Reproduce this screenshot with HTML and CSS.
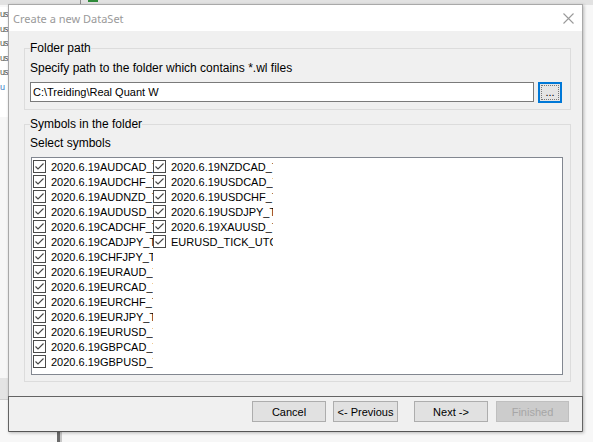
FILE: index.html
```html
<!DOCTYPE html>
<html lang="en">
<head>
  <meta charset="UTF-8">
  <title>Create a new DataSet</title>
  <link rel="stylesheet" href="styles.css">
</head>
<body>
  <div class="bg-toolbar"><span class="bg-sep"></span><span class="bg-mark"></span></div>
  <ul class="bg-list">
    <li>us</li>
    <li>us</li>
    <li>us</li>
    <li>us</li>
    <li>us</li>
    <li class="bg-link">u</li>
  </ul>
  <div class="bg-panel"></div>
  <div class="bg-bar"></div>

  <div class="dialog">
    <div class="titlebar">
      <span class="title">Create a new DataSet</span>
      <svg class="close" width="11" height="11" viewBox="0 0 11 11">
        <path d="M0.5 0.5 L10.5 10.5 M10.5 0.5 L0.5 10.5" stroke="#9a9a9a" stroke-width="1.1" fill="none"/>
      </svg>
    </div>

    <div class="content">
      <fieldset class="group folder">
        <legend>Folder path</legend>
        <p class="hint">Specify path to the folder which contains *.wl files</p>
        <div class="path-row">
          <input class="path" type="text" value="C:\Treiding\Real Quant W">
          <button class="browse"><span>...</span></button>
        </div>
      </fieldset>

      <fieldset class="group symbols">
        <legend>Symbols in the folder</legend>
        <p class="hint">Select symbols</p>
        <div class="symbol-list">
          <label class="item"><span class="check"></span>2020.6.19AUDCAD_TICK</label>
          <label class="item"><span class="check"></span>2020.6.19AUDCHF_TICK</label>
          <label class="item"><span class="check"></span>2020.6.19AUDNZD_TICK</label>
          <label class="item"><span class="check"></span>2020.6.19AUDUSD_TICK</label>
          <label class="item"><span class="check"></span>2020.6.19CADCHF_TICK</label>
          <label class="item"><span class="check"></span>2020.6.19CADJPY_TICK</label>
          <label class="item"><span class="check"></span>2020.6.19CHFJPY_TICK</label>
          <label class="item"><span class="check"></span>2020.6.19EURAUD_TICK</label>
          <label class="item"><span class="check"></span>2020.6.19EURCAD_TICK</label>
          <label class="item"><span class="check"></span>2020.6.19EURCHF_TICK</label>
          <label class="item"><span class="check"></span>2020.6.19EURJPY_TICK</label>
          <label class="item"><span class="check"></span>2020.6.19EURUSD_TICK</label>
          <label class="item"><span class="check"></span>2020.6.19GBPCAD_TICK</label>
          <label class="item"><span class="check"></span>2020.6.19GBPUSD_TICK</label>
          <label class="item"><span class="check"></span>2020.6.19NZDCAD_TICK</label>
          <label class="item"><span class="check"></span>2020.6.19USDCAD_TICK</label>
          <label class="item"><span class="check"></span>2020.6.19USDCHF_TICK</label>
          <label class="item"><span class="check"></span>2020.6.19USDJPY_TICK</label>
          <label class="item"><span class="check"></span>2020.6.19XAUUSD_TICK</label>
          <label class="item"><span class="check"></span>EURUSD_TICK_UTC</label>
        </div>
      </fieldset>
    </div>

    <div class="footer">
      <button class="btn cancel">Cancel</button>
      <button class="btn prev">&lt;- Previous</button>
      <button class="btn next">Next -&gt;</button>
      <button class="btn finish" disabled>Finished</button>
    </div>
  </div>
</body>
</html>
```

FILE: styles.css
```css
body {
  margin: 0;
  width: 593px;
  height: 442px;
  overflow: hidden;
  position: relative;
  background: #f7f7f7;
  font-family: "Liberation Sans", Arial, sans-serif;
  font-size: 11px;
  color: #000;
}

/* things behind the dialog */
.bg-toolbar {
  position: absolute;
  left: 0;
  top: 0;
  width: 593px;
  height: 5px;
  background: #e2e2e2;
}
.bg-sep {
  position: absolute;
  left: 80px;
  top: 0;
  width: 1px;
  height: 5px;
  background: #8a8a8a;
}
.bg-mark {
  position: absolute;
  left: 88px;
  top: 0;
  width: 10px;
  height: 2px;
  background: #2f8a3a;
}
.bg-list {
  position: absolute;
  left: 0;
  top: 7px;
  margin: 0;
  padding: 0;
  list-style: none;
  background: #fff;
  width: 8px;
  height: 110px;
  font-size: 9px;
  letter-spacing: -1px;
}
.bg-list li {
  line-height: 14.6px;
  color: #555;
}
.bg-list .bg-link {
  color: #3b7dc4;
}
.bg-panel {
  position: absolute;
  left: 0;
  top: 378px;
  width: 8px;
  height: 21px;
  background: #e4e4e4;
  border-bottom: 1px solid #cfcfcf;
}
.bg-bar {
  position: absolute;
  left: 57px;
  top: 431px;
  width: 3px;
  height: 11px;
  background: #6a6a6a;
  border-right: 2px solid #c8c8c8;
}

/* dialog */
.dialog {
  position: absolute;
  left: 8px;
  top: 4px;
  width: 573px;
  height: 426px;
  border: 1px solid #a9a9a9;
  border-bottom-color: #555;
  background: #f0f0f0;
  display: flex;
  flex-direction: column;
  box-shadow: 1px 1px 3px rgba(0, 0, 0, 0.25);
}
.titlebar {
  height: 26px;
  flex: none;
  background: #fff;
  display: flex;
  align-items: center;
  justify-content: space-between;
  padding: 0 8px 0 4px;
}
.title {
  font-family: "Noto Sans", "Open Sans", sans-serif;
  font-size: 11px;
  color: #9a9a9a;
}
.content {
  flex: 1;
  padding: 10px 11px 0 15px;
}
.group {
  margin: 0;
  padding: 0 5px 6px;
  border: 1px solid #dcdcdc;
  min-width: 0;
}
.group legend {
  padding: 0;
  font-size: 12px;
  line-height: 14px;
}
.folder {
  margin-bottom: 7px;
}
.hint {
  margin: 6px 0 7px;
  font-size: 12px;
  line-height: 14px;
}
.symbols .hint {
  margin-top: 5px;
}
.path-row {
  display: flex;
  gap: 4px;
}
.path {
  width: 504px;
  height: 20px;
  box-sizing: border-box;
  margin: 0;
  padding: 0 2px;
  border: 1px solid #7a7a7a;
  background: #fff;
  font: inherit;
  outline: none;
}
.browse {
  width: 24px;
  height: 21px;
  box-sizing: border-box;
  margin: 0;
  padding: 2px;
  border: 1px solid #0078d7;
  box-shadow: inset 0 0 0 1px #0078d7;
  background: #e5e5e5;
  font: inherit;
}
.browse span {
  display: block;
  height: 100%;
  box-sizing: border-box;
  border: 1px dotted #777;
  line-height: 12px;
}

.symbol-list {
  width: 532px;
  height: 218px;
  box-sizing: border-box;
  margin-left: 1px;
  padding: 1px;
  border: 1px solid #828790;
  background: #fff;
  display: grid;
  grid-auto-flow: column;
  grid-template-rows: repeat(14, 15px);
  grid-auto-columns: 120px;
}
.item {
  display: flex;
  align-items: center;
  overflow: hidden;
  white-space: nowrap;
}
.check {
  flex: none;
  width: 13px;
  height: 13px;
  box-sizing: border-box;
  margin-right: 5px;
  border: 1px solid #4a4a4a;
  background: #fff url("data:image/svg+xml,%3Csvg xmlns='http://www.w3.org/2000/svg' width='11' height='11'%3E%3Cpath d='M1.5 5.5 L4 8 L9.5 2.5' stroke='%23444' stroke-width='1.1' fill='none'/%3E%3C/svg%3E") no-repeat center;
}

/* footer buttons */
.footer {
  height: 30px;
  flex: none;
  margin: 0 -1px;
  border: 1px solid #646464;
  border-bottom: none;
  display: flex;
  justify-content: flex-end;
  align-items: flex-start;
  padding: 4px 13px 0 0;
}
.btn {
  height: 21px;
  box-sizing: border-box;
  margin: 0;
  padding: 0;
  border: 1px solid #adadad;
  background: #e1e1e1;
  font: inherit;
  color: #000;
}
.cancel {
  width: 74px;
}
.prev {
  width: 65px;
  margin-left: 7px;
}
.next {
  width: 74px;
  margin-left: 16px;
}
.finish {
  width: 73px;
  margin-left: 8px;
  background: #cccccc;
  border-color: #bfbfbf;
  color: #a6a6a6;
}
```
